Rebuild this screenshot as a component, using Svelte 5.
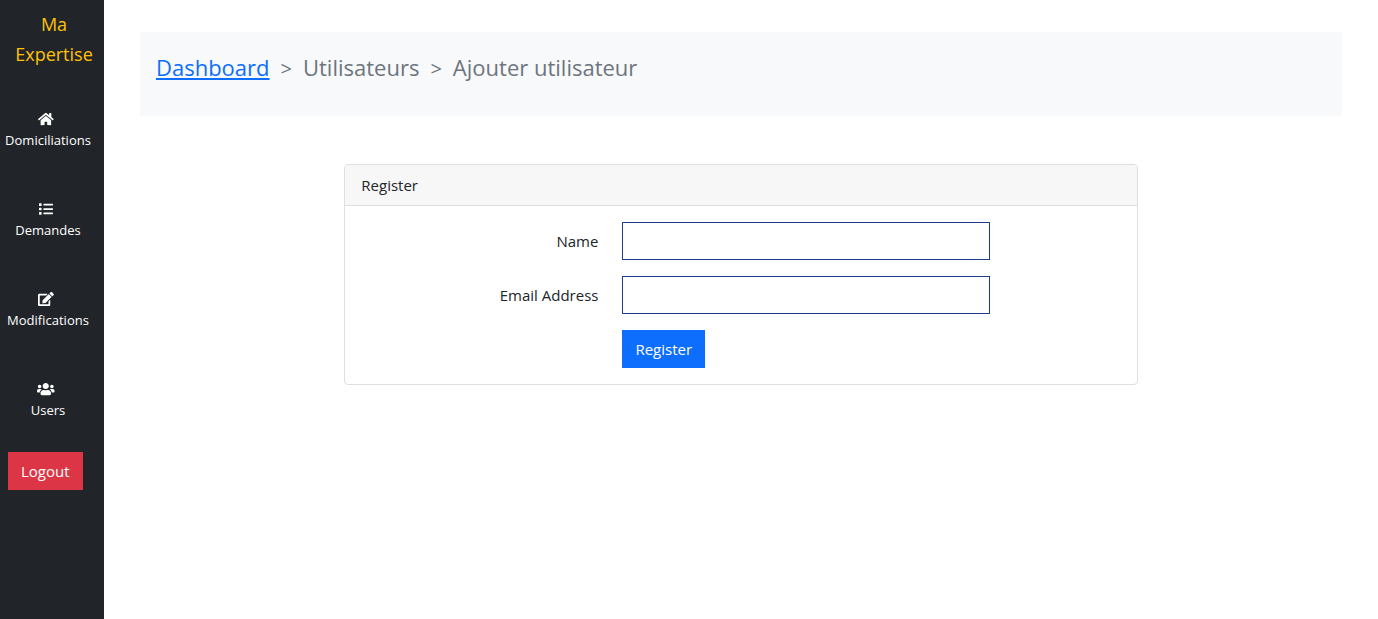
<script>
  const items = [
    {
      label: 'Domiciliations',
      width: 576,
      path: 'M280.37 148.26L96 300.11V464a16 16 0 0 0 16 16l112.06-.29a16 16 0 0 0 15.92-16V368a16 16 0 0 1 16-16h64a16 16 0 0 1 16 16v95.64a16 16 0 0 0 16 16.05L464 480a16 16 0 0 0 16-16V300L295.67 148.26a12.19 12.19 0 0 0-15.3 0zM571.6 251.47L488 182.56V44.05a12 12 0 0 0-12-12h-56a12 12 0 0 0-12 12v72.61L318.47 43a48 48 0 0 0-61 0L4.34 251.47a12 12 0 0 0-1.6 16.9l25.5 31A12 12 0 0 0 45.15 301l235.22-193.74a12.19 12.19 0 0 1 15.3 0L530.9 301a12 12 0 0 0 16.9-1.6l25.5-31a12 12 0 0 0-1.7-16.93z'
    },
    {
      label: 'Demandes',
      width: 512,
      path: 'M80 368H16a16 16 0 0 0-16 16v64a16 16 0 0 0 16 16h64a16 16 0 0 0 16-16v-64a16 16 0 0 0-16-16zm0-320H16A16 16 0 0 0 0 64v64a16 16 0 0 0 16 16h64a16 16 0 0 0 16-16V64a16 16 0 0 0-16-16zm0 160H16a16 16 0 0 0-16 16v64a16 16 0 0 0 16 16h64a16 16 0 0 0 16-16v-64a16 16 0 0 0-16-16zm416 176H176a16 16 0 0 0-16 16v32a16 16 0 0 0 16 16h320a16 16 0 0 0 16-16v-32a16 16 0 0 0-16-16zm0-320H176a16 16 0 0 0-16 16v32a16 16 0 0 0 16 16h320a16 16 0 0 0 16-16V80a16 16 0 0 0-16-16zm0 160H176a16 16 0 0 0-16 16v32a16 16 0 0 0 16 16h320a16 16 0 0 0 16-16v-32a16 16 0 0 0-16-16z'
    },
    {
      label: 'Modifications',
      width: 576,
      path: 'M402.6 83.2l90.2 90.2c3.8 3.8 3.8 10 0 13.8L274.4 405.6l-92.8 10.3c-12.4 1.4-22.9-9.1-21.5-21.5l10.3-92.8L388.8 83.2c3.8-3.8 10-3.8 13.8 0zm162-22.9l-48.8-48.8c-15.2-15.2-39.9-15.2-55.2 0l-35.4 35.4c-3.8 3.8-3.8 10 0 13.8l90.2 90.2c3.8 3.8 10 3.8 13.8 0l35.4-35.4c15.2-15.3 15.2-40 0-55.2zM384 346.2V448H64V128h229.8c3.2 0 6.2-1.3 8.5-3.5l40-40c7.6-7.6 2.2-20.5-8.5-20.5H48C21.5 64 0 85.5 0 112v352c0 26.5 21.5 48 48 48h352c26.5 0 48-21.5 48-48V306.2c0-10.7-12.9-16-20.5-8.5l-40 40c-2.2 2.3-3.5 5.3-3.5 8.5z'
    },
    {
      label: 'Users',
      width: 640,
      path: 'M96 224c35.3 0 64-28.7 64-64s-28.7-64-64-64-64 28.7-64 64 28.7 64 64 64zm448 0c35.3 0 64-28.7 64-64s-28.7-64-64-64-64 28.7-64 64 28.7 64 64 64zm32 32h-64c-17.6 0-33.5 7.1-45.1 18.6 40.3 22.1 68.9 62 75.1 109.4h66c17.7 0 32-14.3 32-32v-32c0-35.3-28.7-64-64-64zm-256 0c61.9 0 112-50.1 112-112S381.9 32 320 32 208 82.1 208 144s50.1 112 112 112zm76.8 32h-8.3c-20.8 10-43.9 16-68.5 16s-47.6-6-68.5-16h-8.3C179.6 288 128 339.6 128 403.2V432c0 26.5 21.5 48 48 48h288c26.5 0 48-21.5 48-48v-28.8c0-63.6-51.6-115.2-115.2-115.2zm-223.7-13.4C161.5 263.1 145.6 256 128 256H64c-35.3 0-64 28.7-64 64v32c0 17.7 14.3 32 32 32h65.9c6.3-47.4 34.9-87.3 75.2-109.4z'
    }
  ];
</script>

<div class="layout">
  <aside>
    <a class="brand" href="#home">Ma Expertise</a>
    <nav>
      {#each items as item}
        <a class="item" href={'#' + item.label.toLowerCase()}>
          <svg viewBox="0 0 {item.width} 512" aria-hidden="true"><path d={item.path} /></svg>
          <span>{item.label}</span>
        </a>
      {/each}
    </nav>
    <button class="btn logout" type="button">Logout</button>
  </aside>

  <main>
    <nav class="crumbs">
      <ol>
        <li><a href="#dashboard">Dashboard</a></li>
        <li>Utilisateurs</li>
        <li>Ajouter utilisateur</li>
      </ol>
    </nav>
    <div class="grid">
      <section class="card">
        <header>Register</header>
        <form onsubmit={(e) => e.preventDefault()}>
          <label for="name">Name</label>
          <input id="name" type="text" />
          <label for="email">Email Address</label>
          <input id="email" type="email" />
          <button class="btn submit" type="submit">Register</button>
        </form>
      </section>
    </div>
  </main>
</div>

<style>
  :global(body) {
    margin: 0;
    background: #fff;
  }
  .layout, .layout * {
    box-sizing: border-box;
  }
  .layout {
    display: flex;
    min-height: 100vh;
    font-family: "Segoe UI", "Open Sans", "Noto Sans", sans-serif;
    font-size: 15px;
    line-height: 24px;
    color: #212529;
  }
  aside {
    flex: none;
    width: 104px;
    background: #212529;
  }
  .brand {
    display: block;
    padding: 9px 8px 0 12px;
    font-size: 18px;
    line-height: 30px;
    text-align: center;
    text-decoration: none;
    color: #ffc107;
  }
  aside nav {
    display: flex;
    flex-direction: column;
    gap: 48px;
    padding: 40px 8px 0 0;
  }
  .item {
    display: flex;
    flex-direction: column;
    align-items: center;
    height: 42px;
    font-size: 13px;
    line-height: 21px;
    color: #fff;
    text-decoration: none;
  }
  .item svg {
    height: 14px;
    margin: 3px 4px 4px 0;
    fill: #fff;
  }
  .btn {
    height: 38px;
    padding: 0 13px;
    border: 0;
    font: inherit;
    color: #fff;
    cursor: pointer;
  }
  .logout {
    margin: 31px 8px 0;
    background: #dc3545;
  }
  main {
    flex: 1;
    min-width: 0;
    padding: 32px 36px;
  }
  .crumbs {
    padding: 17px 16px 15px;
    background: #f8f9fa;
    font-size: 22px;
    line-height: 36px;
    color: #6c757d;
  }
  ol {
    display: flex;
    flex-wrap: wrap;
    margin: 0 0 16px;
    padding: 0;
    list-style: none;
  }
  li + li::before {
    content: ">";
    padding: 0 11px;
    font-size: 20px;
    line-height: 24px;
  }
  li a {
    color: #0d6efd;
  }
  .grid {
    display: grid;
    grid-template-columns: repeat(12, 1fr);
    column-gap: 24px;
    margin-top: 48px;
  }
  .card {
    grid-column: 3 / span 8;
    border: 1px solid #dfdfdf;
    border-radius: 4px;
  }
  header {
    padding: 8px 16px;
    background: #f7f7f7;
    border-bottom: 1px solid #dfdfdf;
    border-radius: 3px 3px 0 0;
  }
  form {
    display: grid;
    grid-template-columns: repeat(12, 1fr);
    gap: 16px 24px;
    align-items: center;
    padding: 16px;
  }
  label {
    grid-column: 1 / span 4;
    text-align: right;
  }
  input {
    grid-column: 5 / span 6;
    width: 100%;
    height: 38px;
    padding: 6px 12px;
    border: 1px solid #1f3a93;
    border-radius: 0;
    background: #fff;
    font: inherit;
  }
  .submit {
    grid-column: 5 / span 6;
    justify-self: start;
    background: #0d6efd;
  }
</style>
